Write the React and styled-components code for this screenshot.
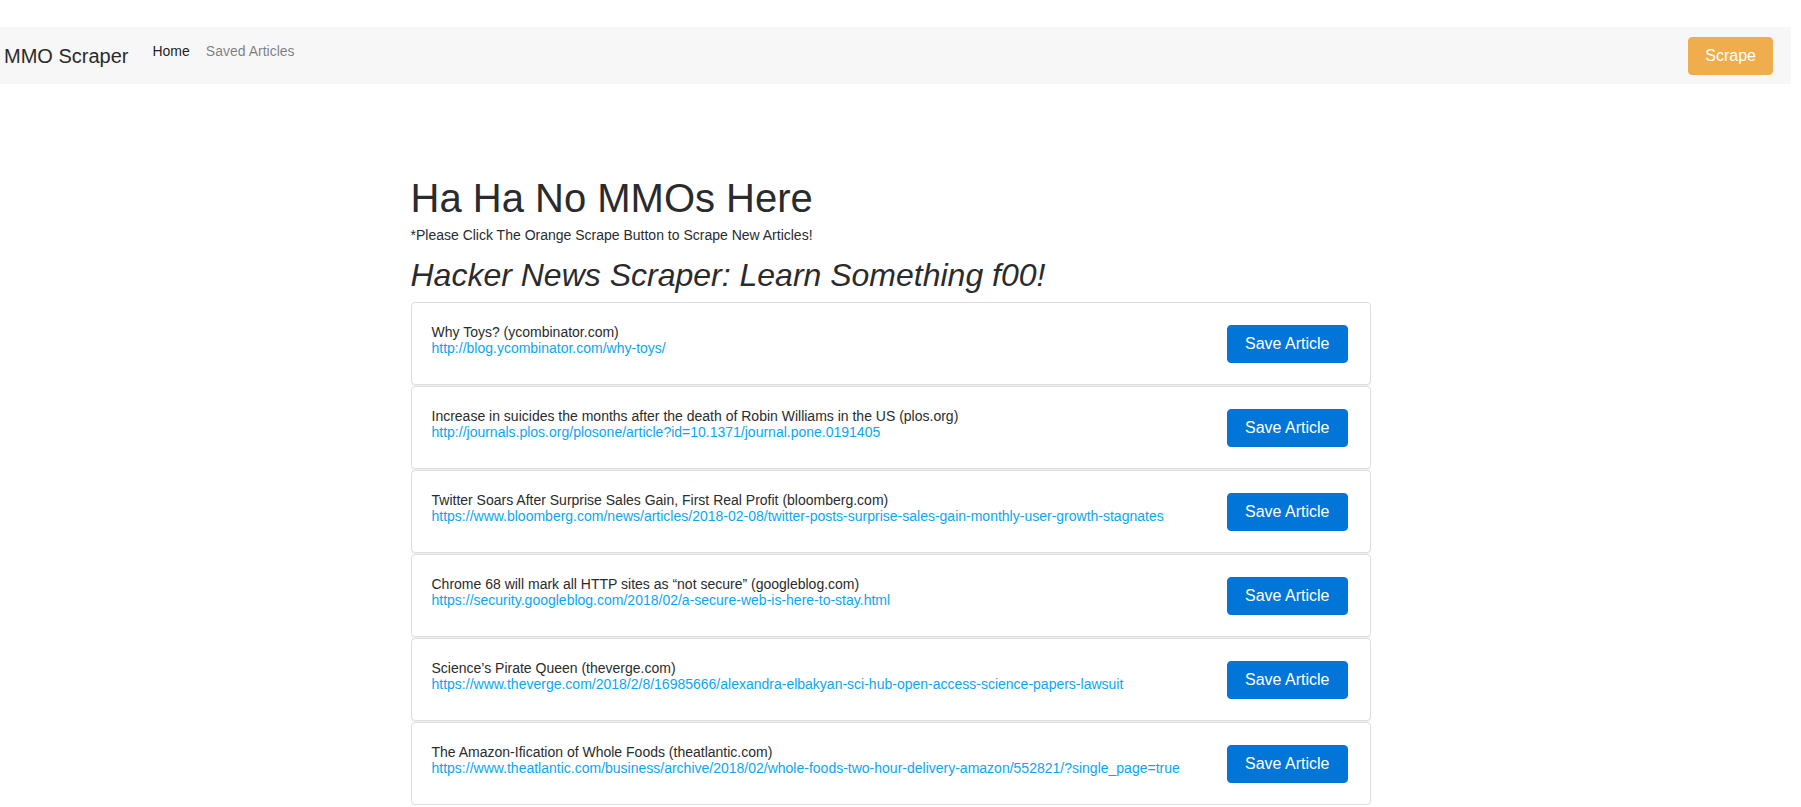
import React from 'react';
import styled, { createGlobalStyle } from 'styled-components';

const GlobalStyle = createGlobalStyle`
  body {
    margin: 0;
    font-family: "Liberation Sans", Arial, sans-serif;
    color: #292b2c;
    background: #fff;
  }
`;

const Page = styled.div`
  padding-top: 27px;
`;

const Navbar = styled.nav`
  display: flex;
  align-items: center;
  height: 57px;
  margin-right: 10px;
  padding: 0 18px 0 4px;
  background: #f7f7f7;
`;

const LeftGroup = styled.div`
  display: flex;
  align-items: flex-start;
`;

const Brand = styled.a`
  font-size: 20px;
  line-height: 30px;
  margin-right: 16px;
  color: #292b2c;
  text-decoration: none;
`;

const NavList = styled.ul`
  display: flex;
  list-style: none;
  margin: 0;
  padding: 0;
`;

const NavLink = styled.a`
  display: block;
  padding: 0 8px;
  font-size: 14px;
  line-height: 21px;
  text-decoration: none;
  color: ${({ $active }) => ($active ? 'rgba(0, 0, 0, 0.9)' : 'rgba(0, 0, 0, 0.5)')};
`;

const Button = styled.button`
  font-family: inherit;
  font-size: 16px;
  line-height: 20px;
  padding: 8px 16px;
  border-radius: 4px;
  color: #fff;
  cursor: pointer;
  white-space: nowrap;
  background: ${({ $variant }) => ($variant === 'warning' ? '#f0ad4e' : '#0275d8')};
  border: 1px solid ${({ $variant }) => ($variant === 'warning' ? '#f0ad4e' : '#0275d8')};
`;

const ScrapeButton = styled(Button)`
  margin-left: auto;
`;

const Main = styled.main`
  width: 960px;
  margin-left: calc(50% - 490px);
  padding-top: 92px;
`;

const Title = styled.h1`
  margin: 0;
  font-size: 40px;
  line-height: 44px;
  font-weight: 400;
`;

const Note = styled.p`
  margin: 7px 0 0;
  font-size: 14px;
  line-height: 16px;
`;

const Subtitle = styled.h2`
  margin: 15px 0 9px;
  font-size: 32px;
  line-height: 35px;
  font-weight: 400;
  font-style: italic;
`;

const ArticleList = styled.div`
  display: flex;
  flex-direction: column;
  gap: 1px;
`;

const Card = styled.div`
  box-sizing: border-box;
  display: flex;
  align-items: center;
  justify-content: space-between;
  height: 83px;
  padding: 20px 22px 20px 20px;
  border: 1px solid #ddd;
  border-radius: 4px;
  box-shadow: 0 1px 0 rgba(0, 0, 0, 0.06);
`;

const CardText = styled.div`
  align-self: flex-start;
  margin-top: 1px;
  font-size: 14px;
  line-height: 16px;
`;

const ArticleLink = styled.a`
  display: block;
  color: #0ba6f3;
  text-decoration: none;
`;

const SaveButton = styled(Button)`
  padding: 8px 17px;
`;

const articles = [
  {
    title: 'Why Toys? (ycombinator.com)',
    url: 'http://blog.ycombinator.com/why-toys/',
  },
  {
    title: 'Increase in suicides the months after the death of Robin Williams in the US (plos.org)',
    url: 'http://journals.plos.org/plosone/article?id=10.1371/journal.pone.0191405',
  },
  {
    title: 'Twitter Soars After Surprise Sales Gain, First Real Profit (bloomberg.com)',
    url: 'https://www.bloomberg.com/news/articles/2018-02-08/twitter-posts-surprise-sales-gain-monthly-user-growth-stagnates',
  },
  {
    title: 'Chrome 68 will mark all HTTP sites as \u201cnot secure\u201d (googleblog.com)',
    url: 'https://security.googleblog.com/2018/02/a-secure-web-is-here-to-stay.html',
  },
  {
    title: 'Science\u2019s Pirate Queen (theverge.com)',
    url: 'https://www.theverge.com/2018/2/8/16985666/alexandra-elbakyan-sci-hub-open-access-science-papers-lawsuit',
  },
  {
    title: 'The Amazon-Ification of Whole Foods (theatlantic.com)',
    url: 'https://www.theatlantic.com/business/archive/2018/02/whole-foods-two-hour-delivery-amazon/552821/?single_page=true',
  },
];

const App = () => (
  <Page>
    <GlobalStyle />
    <Navbar>
      <LeftGroup>
        <Brand href="#">MMO Scraper</Brand>
        <NavList>
          <li>
            <NavLink href="#" $active>
              Home
            </NavLink>
          </li>
          <li>
            <NavLink href="#">Saved Articles</NavLink>
          </li>
        </NavList>
      </LeftGroup>
      <ScrapeButton $variant="warning">Scrape</ScrapeButton>
    </Navbar>

    <Main>
      <Title>Ha Ha No MMOs Here</Title>
      <Note>*Please Click The Orange Scrape Button to Scrape New Articles!</Note>
      <Subtitle>Hacker News Scraper: Learn Something f00!</Subtitle>

      <ArticleList>
        {articles.map(({ title, url }, i) => (
          <Card key={i}>
            <CardText>
              <div>{title}</div>
              <ArticleLink href={url}>{url}</ArticleLink>
            </CardText>
            <SaveButton>Save Article</SaveButton>
          </Card>
        ))}
      </ArticleList>
    </Main>
  </Page>
);

export default App;
